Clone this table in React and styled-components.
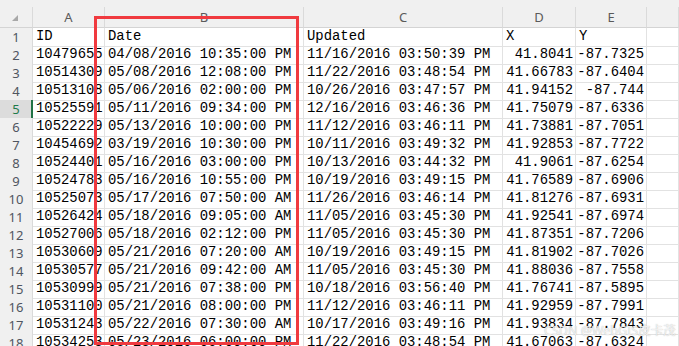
import React from "react";
import styled, { createGlobalStyle } from "styled-components";

const GlobalStyle = createGlobalStyle`
  html, body {
    margin: 0;
    padding: 0;
    background: #ffffff;
    overflow: hidden;
  }
`;

const COLS = "33px 72px 199px 199px 73px 71px 1fr";

const Wrapper = styled.div`
  position: relative;
  width: 679px;
  height: 346px;
  overflow: hidden;
  background: #ffffff;
`;

const TopStrip = styled.div`
  height: 7px;
  background-color: #f0f0f0;
`;

const Row = styled.div`
  display: grid;
  grid-template-columns: ${COLS};
  height: ${(p) => (p.$head ? "21px" : "18px")};
`;

const Corner = styled.div`
  position: relative;
  background-color: #f0f0f0;
  border-right: 1px solid #dadada;
  border-bottom: 1px solid #d4d4d4;
  &::after {
    content: "";
    position: absolute;
    right: 14px;
    bottom: 6px;
    width: 0;
    height: 0;
    border-left: 6px solid transparent;
    border-bottom: 6px solid #a8a8a8;
  }
`;

const ColHead = styled.div`
  background-color: #f0f0f0;
  border-right: 1px solid #dadada;
  border-bottom: 1px solid #d4d4d4;
  font-family: "Noto Sans", "Liberation Sans", sans-serif;
  font-size: 13px;
  color: #5a5a5a;
  display: flex;
  align-items: center;
  justify-content: center;
  line-height: 20px;
`;

const RowHead = styled.div`
  position: relative;
  background-color: ${(p) => (p.$active ? "#dcdcdc" : "#f0f0f0")};
  color: ${(p) => (p.$active ? "#1e7a4a" : "#4f5560")};
  border-right: 1px solid #dadada;
  border-bottom: 1px solid #dcdcdc;
  font-family: "Noto Sans", "Liberation Sans", sans-serif;
  font-size: 13px;
  display: flex;
  align-items: center;
  justify-content: center;
  &::after {
    content: "";
    display: ${(p) => (p.$active ? "block" : "none")};
    position: absolute;
    right: -1px;
    top: 0;
    bottom: 0;
    width: 2px;
    background-color: #217346;
  }
`;

const Cell = styled.div`
  border-right: 1px solid #e2e2e2;
  border-bottom: 1px solid #e2e2e2;
  font-family: "Liberation Mono", "DejaVu Sans Mono", monospace;
  font-size: 13.9px;
  color: #000000;
  line-height: 17px;
  white-space: nowrap;
  overflow: hidden;
  text-align: ${(p) => (p.$num ? "right" : "left")};
  padding: ${(p) => (p.$num ? "0 2px 0 0" : "0 0 0 3px")};
`;

const Highlight = styled.div`
  position: absolute;
  left: 94px;
  top: 16px;
  width: 205px;
  height: 329px;
  box-sizing: border-box;
  border: 3px solid #f03a3f;
  pointer-events: none;
`;

const Watermark = styled.div`
  position: absolute;
  left: 544px;
  top: 320px;
  font-family: "Noto Sans", "Noto Sans CJK SC", sans-serif;
  font-size: 12.5px;
  color: rgba(255, 255, 255, 0.8);
  text-shadow: 0 0 1px rgba(150, 150, 150, 0.8);
  white-space: nowrap;
  pointer-events: none;
`;

const data = [
  ["10479655", "04/08/2016 10:35:00 PM", "11/16/2016 03:50:39 PM", "41.8041", "-87.7325"],
  ["10514309", "05/08/2016 12:08:00 PM", "11/22/2016 03:48:54 PM", "41.66783", "-87.6404"],
  ["10513108", "05/06/2016 02:00:00 PM", "10/26/2016 03:47:57 PM", "41.94152", "-87.744"],
  ["10525591", "05/11/2016 09:34:00 PM", "12/16/2016 03:46:36 PM", "41.75079", "-87.6336"],
  ["10522229", "05/13/2016 10:00:00 PM", "11/12/2016 03:46:11 PM", "41.73881", "-87.7051"],
  ["10454692", "03/19/2016 10:30:00 PM", "10/11/2016 03:49:32 PM", "41.92853", "-87.7722"],
  ["10524401", "05/16/2016 03:00:00 PM", "10/13/2016 03:44:32 PM", "41.9061", "-87.6254"],
  ["10524783", "05/16/2016 10:55:00 PM", "10/19/2016 03:49:15 PM", "41.76589", "-87.6906"],
  ["10525073", "05/17/2016 07:50:00 AM", "11/26/2016 03:46:14 PM", "41.81276", "-87.6931"],
  ["10526424", "05/18/2016 09:05:00 AM", "11/05/2016 03:45:30 PM", "41.92541", "-87.6974"],
  ["10527006", "05/18/2016 02:12:00 PM", "11/05/2016 03:45:30 PM", "41.87351", "-87.7206"],
  ["10530609", "05/21/2016 07:20:00 AM", "10/19/2016 03:49:15 PM", "41.81902", "-87.7026"],
  ["10530577", "05/21/2016 09:42:00 AM", "11/05/2016 03:45:30 PM", "41.88036", "-87.7558"],
  ["10530999", "05/21/2016 07:38:00 PM", "10/18/2016 03:56:40 PM", "41.76741", "-87.5895"],
  ["10531100", "05/21/2016 08:00:00 PM", "11/12/2016 03:46:11 PM", "41.92959", "-87.7991"],
  ["10531243", "05/22/2016 07:30:00 AM", "10/17/2016 03:49:16 PM", "41.93834", "-87.7843"],
  ["10534253", "05/23/2016 06:00:00 PM", "11/22/2016 03:48:54 PM", "41.67063", "-87.6324"],
];

export default function App() {
  return (
    <>
      <GlobalStyle />
      <Wrapper>
        <TopStrip />
        <Row $head>
          <Corner />
          {["A", "B", "C", "D", "E", ""].map((c, i) => (
            <ColHead key={i}>{c}</ColHead>
          ))}
        </Row>
        <Row>
          <RowHead>1</RowHead>
          <Cell>ID</Cell>
          <Cell>Date</Cell>
          <Cell>Updated</Cell>
          <Cell>X</Cell>
          <Cell>Y</Cell>
          <Cell />
        </Row>
        {data.map((r, i) => (
          <Row key={i}>
            <RowHead $active={i + 2 === 5}>{i + 2}</RowHead>
            <Cell>{r[0]}</Cell>
            <Cell>{r[1]}</Cell>
            <Cell>{r[2]}</Cell>
            <Cell $num>{r[3]}</Cell>
            <Cell $num>{r[4]}</Cell>
            <Cell />
          </Row>
        ))}
        <Highlight />
        <Watermark>CSDN @WebGIS皮卡茂</Watermark>
      </Wrapper>
    </>
  );
}
